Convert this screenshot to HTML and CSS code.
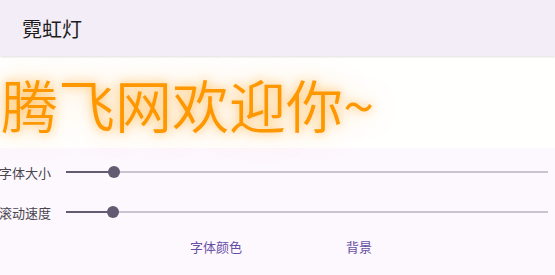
FILE: index.html
```html
<!doctype html>
<html>
 <head>
  <meta charset="utf-8">
  <title>霓虹灯</title>
  <link rel="stylesheet" href="styles.css">
 </head>
 <body>
  <div class="appbar">霓虹灯</div>
  <div class="stage">
    <span class="neon">腾飞网欢迎你~</span>
  </div>
  <div class="panel">
    <div class="row">
      <span class="label">字体大小</span>
      <div class="slider">
        <div class="active" style="width: 48px"></div>
        <div class="thumb"></div>
        <div class="rest"></div>
      </div>
    </div>
    <div class="row">
      <span class="label">滚动速度</span>
      <div class="slider">
        <div class="active" style="width: 47px"></div>
        <div class="thumb"></div>
        <div class="rest"></div>
      </div>
    </div>
    <div class="buttons">
      <span class="btn">字体颜色</span>
      <span class="btn">背景</span>
    </div>
  </div>
 </body>
</html>
```

FILE: styles.css
```css
html, body { margin: 0; padding: 0; }
body {
  width: 555px; height: 275px; overflow: hidden;
  background-color: #fdf7fe;
  font-family: "Noto Sans CJK SC", "Noto Sans", sans-serif;
}
.appbar {
  height: 56px; box-sizing: border-box;
  padding-left: 22px;
  display: flex; align-items: center;
  background-color: #f3edf7; color: #1d1b20;
  font-size: 20px;
  box-shadow: 0 1px 2px rgba(0,0,0,0.12);
  position: relative;
}
.stage {
  height: 92px; background-color: #fffffe;
  display: flex; align-items: center;
  padding-left: 1px;
}
.neon {
  font-size: 57px; line-height: 1; color: #ff9800; font-weight: 350;
  text-shadow: 0 0 10px rgba(255,183,77,0.85), 0 0 26px rgba(255,167,38,0.5);
  margin-top: 2px;
}
.panel { padding-top: 11px; }
.row { display: flex; align-items: center; height: 26px; margin-bottom: 14px; }
.label { width: 52px; margin-left: -1px; font-size: 13px; color: #49454f; white-space: nowrap; }
.slider { margin-left: 15px; width: 482px; display: flex; align-items: center; }
.active { height: 2px; background-color: #625b71; }
.thumb {
  width: 12px; height: 12px; border-radius: 50%;
  background-color: #625b71; margin: 0 -6px; position: relative;
}
.rest { flex: 1; height: 2px; background-color: #cac4d0; }
.buttons { display: flex; padding-left: 190px; gap: 104px; margin-top: -2px; }
.btn { font-size: 13px; color: #6750a4; }
```
